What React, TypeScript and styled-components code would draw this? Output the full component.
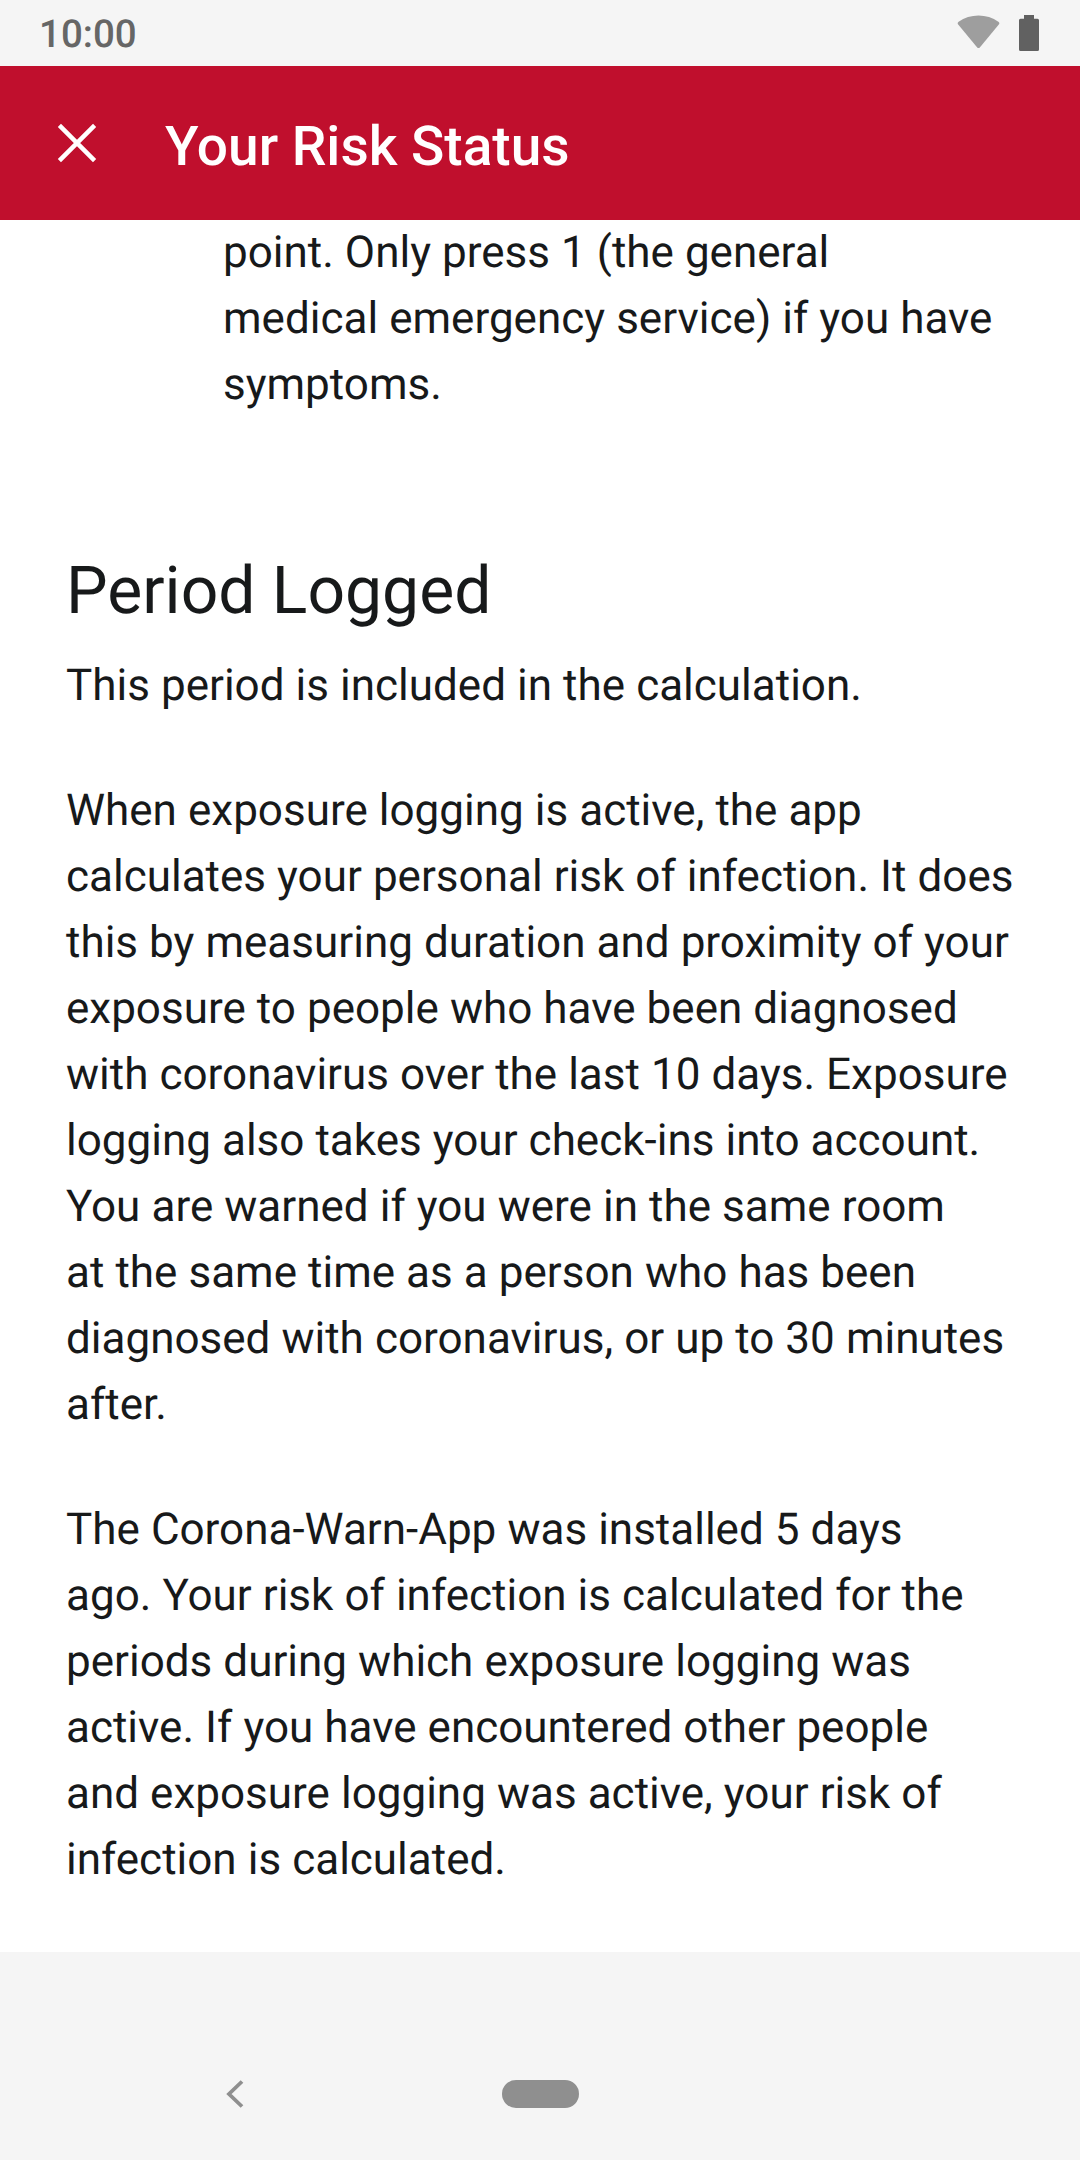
import React from "react";
import styled, { createGlobalStyle } from "styled-components";

const Global = createGlobalStyle`
  * { box-sizing: border-box; }
  body { margin: 0; background: #f5f5f5; font-family: Roboto, sans-serif; color: #17191a; text-rendering: geometricPrecision; }
`;
const Screen = styled.div`
  width: 1080px; height: 2160px; display: flex; flex-direction: column; overflow: hidden; background: #f5f5f5;
`;
const StatusBar = styled.header`
  flex: none; height: 66px; padding: 0 41px 0 39px; display: flex; align-items: center; justify-content: space-between;
`;
const Clock = styled.time`
  font-size: 38.5px; font-weight: 500; line-height: 46px; color: #666; padding-top: 4px;
`;
const StatusIcons = styled.div`
  display: flex; align-items: center; gap: 19px; svg { display: block; }
`;
const AppBar = styled.div`
  flex: none; height: 154px; padding: 0 57px; display: flex; align-items: center; gap: 68px; background: #c00f2d; color: #fff;
`;
const IconButton = styled.button`
  padding: 0; border: 0; background: none; color: inherit; svg { display: block; }
`;
const Title = styled.h1`
  margin: 0; padding-top: 8px; font-size: 55px; font-weight: 500; line-height: 64px;
`;
const Content = styled.main`
  flex: none; height: 1732px; overflow: hidden; padding: 0 66px; background: #fff; white-space: pre;
`;
const Paragraph = styled.p<{ $top?: number; $left?: number }>`
  margin: ${(p) => p.$top ?? 0}px 0 0 ${(p) => p.$left ?? 0}px;
  font-size: 44px; line-height: 66px; word-spacing: 0.15px;
`;
const Heading = styled.h2`
  margin: 136px 0 0; font-size: 66px; font-weight: 400; line-height: 77px;
`;
const NavBar = styled.nav`
  flex: 1; padding: 76px 0 0 225px; display: flex; align-items: center; gap: 257px;
`;
const HomePill = styled.span`
  width: 77px; height: 28px; border-radius: 14px; background: #8f8f8f;
`;

const logged = `When exposure logging is active, the app
calculates your personal risk of infection. It does
this by measuring duration and proximity of your
exposure to people who have been diagnosed
with coronavirus over the last 10 days. Exposure
logging also takes your check-ins into account.
You are warned if you were in the same room
at the same time as a person who has been
diagnosed with coronavirus, or up to 30 minutes
after.`;
const installed = `The Corona-Warn-App was installed 5 days
ago. Your risk of infection is calculated for the
periods during which exposure logging was
active. If you have encountered other people
and exposure logging was active, your risk of
infection is calculated.`;

export default function App() {
  return (
    <Screen>
      <Global />
      <StatusBar>
        <Clock>10:00</Clock>
        <StatusIcons>
          <svg width="43" height="36" viewBox="0 0 43 36"><path d="M1.2 9.6Q0 8 1.6 6.7C13-1.7 30-1.7 41.4 6.7Q43 8 41.8 9.6L23 32.2Q21.5 34 20 32.2Z" fill="#9e9e9e" /></svg>
          <svg width="20" height="36" viewBox="0 0 20 36"><path d="M5 0h10v3.7h3.5q1.5 0 1.5 1.5v29.3q0 1.5-1.5 1.5h-17Q0 36 0 34.5V5.2Q0 3.7 1.5 3.7H5Z" fill="#616161" /></svg>
        </StatusIcons>
      </StatusBar>
      <AppBar>
        <IconButton aria-label="Close">
          <svg width="40" height="40" viewBox="0 0 40 40"><path d="M2.4 2.4l35.2 35.2M37.6 2.4L2.4 37.6" stroke="currentColor" strokeWidth="4.5" /></svg>
        </IconButton>
        <Title>Your Risk Status</Title>
      </AppBar>
      <Content>
        <Paragraph $top={-1} $left={157}>{"point. Only press 1 (the general\nmedical emergency service) if you have\nsymptoms."}</Paragraph>
        <Heading>Period Logged</Heading>
        <Paragraph $top={22}>This period is included in the calculation.</Paragraph>
        <Paragraph $top={59}>{logged}</Paragraph>
        <Paragraph $top={59}>{installed}</Paragraph>
      </Content>
      <NavBar>
        <svg width="20" height="30" viewBox="0 0 20 30"><path d="M17 2.5L4 15l13 12.5" fill="none" stroke="#8f8f8f" strokeWidth="3.8" /></svg>
        <HomePill />
      </NavBar>
    </Screen>
  );
}
